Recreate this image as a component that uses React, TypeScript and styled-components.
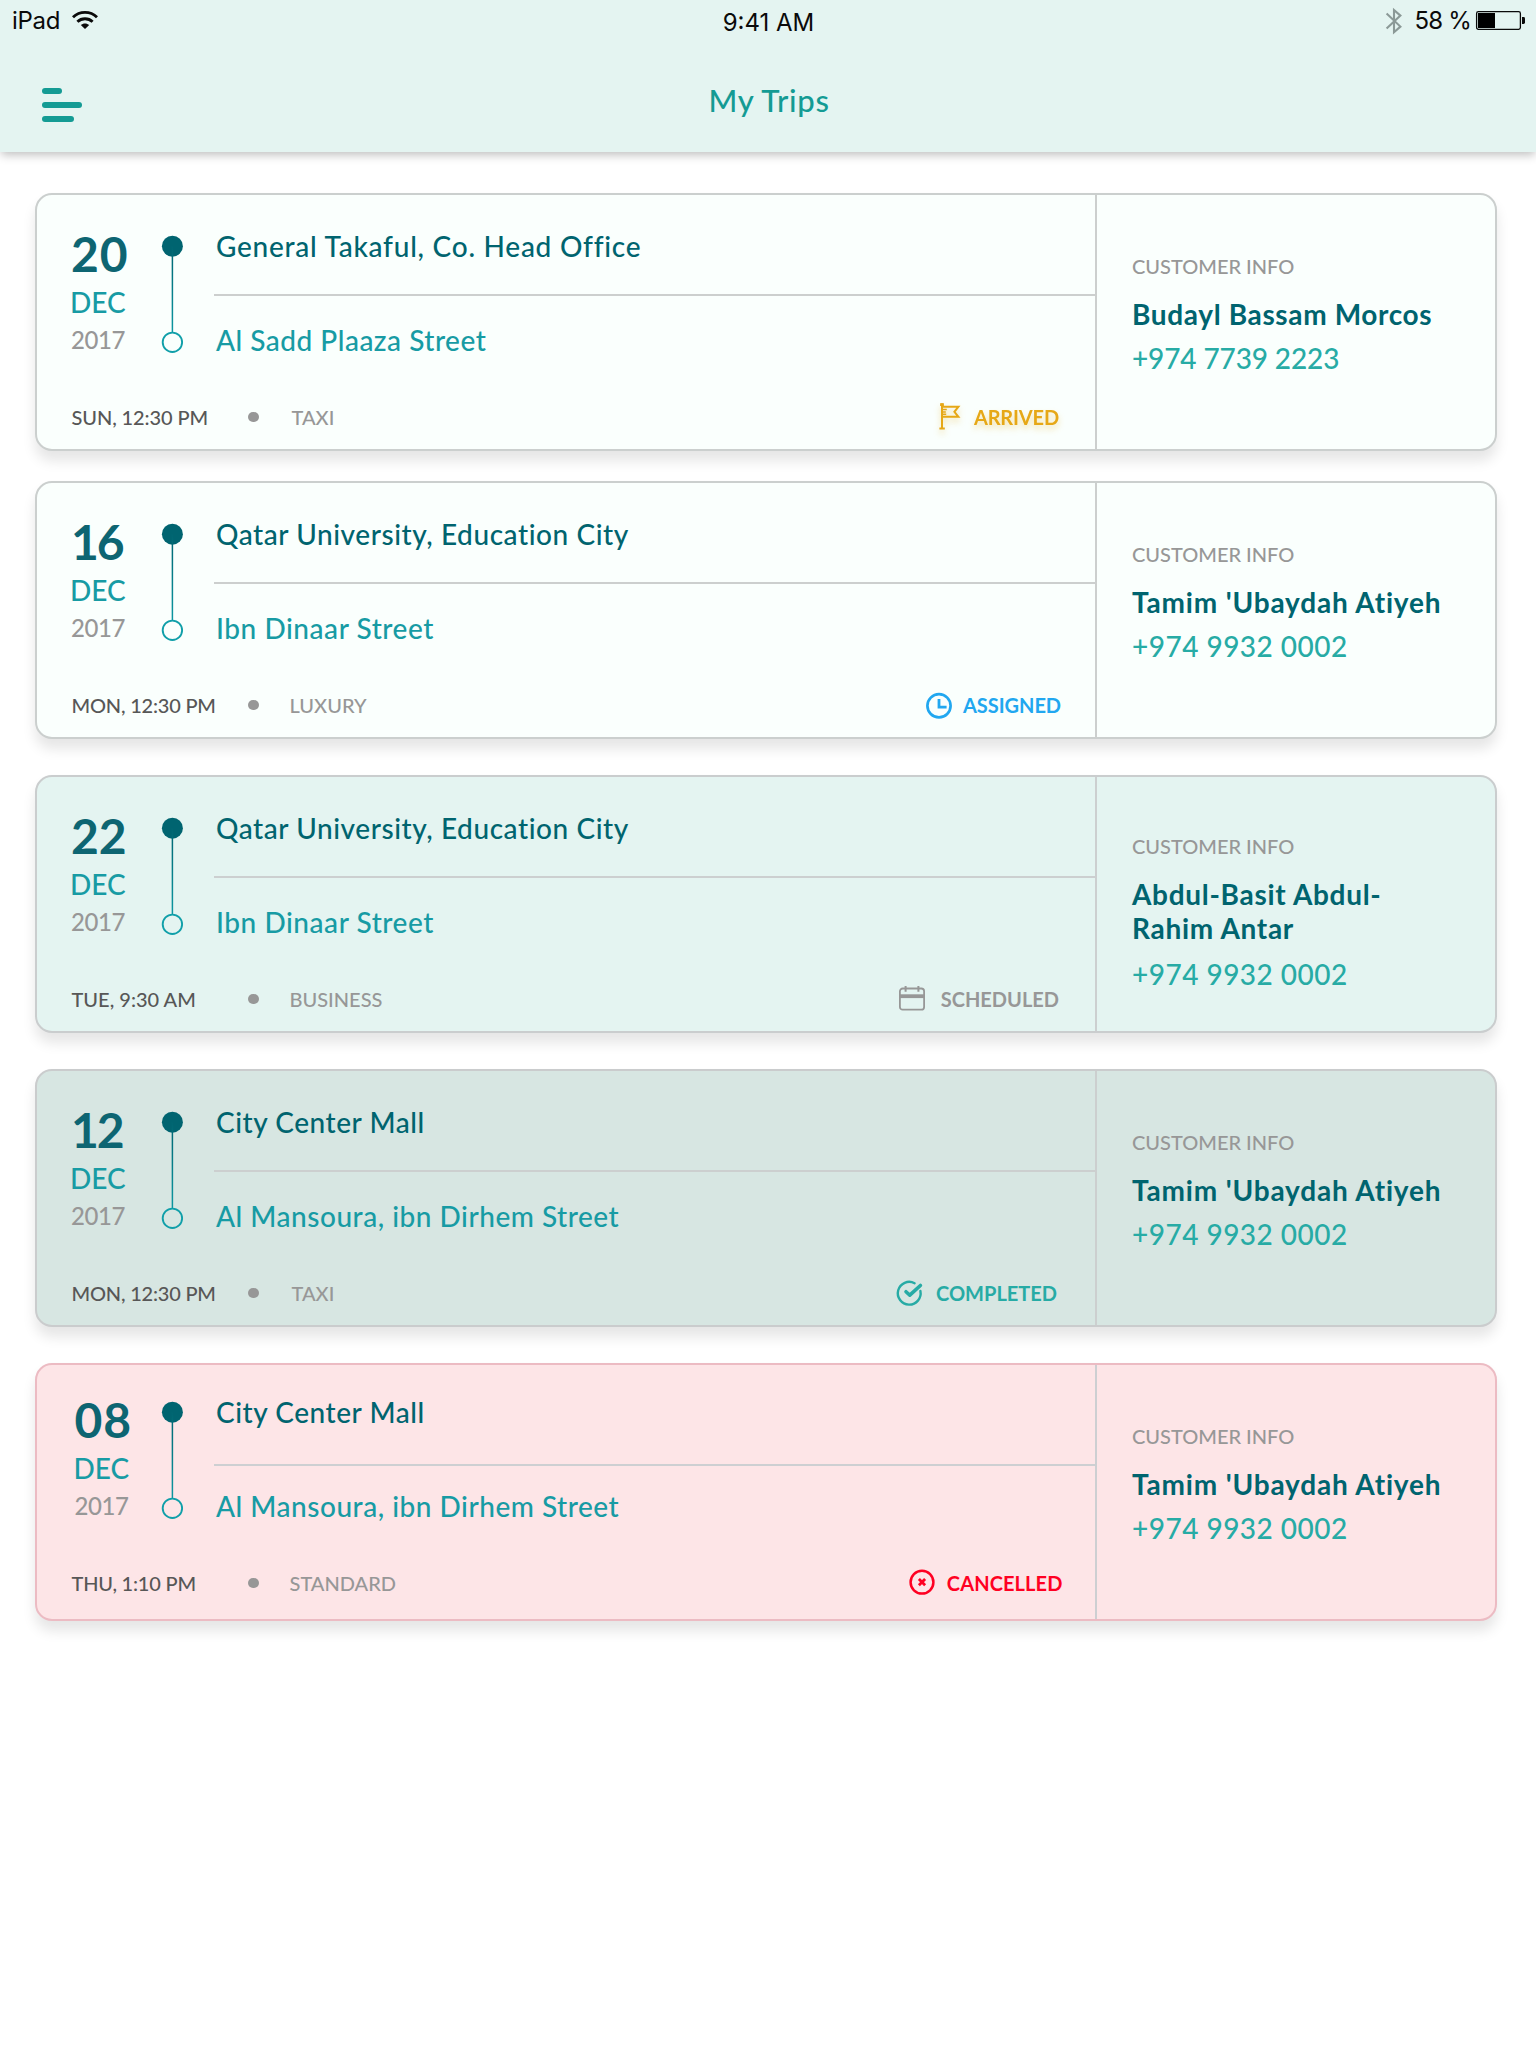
import React from "react";
import styled, { createGlobalStyle } from "styled-components";

type Tone = "fresh" | "soft" | "done" | "cancelled";
type StatusKind = "arrived" | "assigned" | "scheduled" | "completed" | "cancelled";
type Label = { text: string; track?: number };

interface Trip {
  day: Label;
  month: string;
  year: string;
  from: Label;
  to: Label;
  time: Label;
  service: Label & { indent?: number };
  status: StatusKind;
  customer: { lines: string[]; track?: number };
  phone: Label;
  tone: Tone;
  raised?: boolean;
}

const tones: Record<Tone, { bg: string; border: string; rule: string }> = {
  fresh: { bg: "#fafffd", border: "#cbcfce", rule: "#cccfce" },
  soft: { bg: "#e4f4f1", border: "#cacdce", rule: "#cccfd0" },
  done: { bg: "#d7e6e2", border: "#cacccd", rule: "#cccfcf" },
  cancelled: { bg: "#fde5e7", border: "#ecbbc3", rule: "#cdcfd2" },
};

const statuses: Record<StatusKind, { text: string; color: string; end: number; gap: number; track: number }> = {
  arrived: { text: "ARRIVED", color: "#e6a817", end: 36, gap: 14, track: -0.15 },
  assigned: { text: "ASSIGNED", color: "#21a7f0", end: 34, gap: 11, track: -0.05 },
  scheduled: { text: "SCHEDULED", color: "#979797", end: 36, gap: 16, track: 0 },
  completed: { text: "COMPLETED", color: "#27aba5", end: 38, gap: 13, track: 0 },
  cancelled: { text: "CANCELLED", color: "#ff0022", end: 32.5, gap: 12, track: 0.1 },
};

const trips: Trip[] = [
  {
    day: { text: "20", track: 0.8 }, month: "DEC", year: "2017",
    from: { text: "General Takaful, Co. Head Office", track: 0.75 },
    to: { text: "Al Sadd Plaaza Street", track: 0.5 },
    time: { text: "SUN, 12:30 PM", track: -0.1 },
    service: { text: "TAXI", indent: 2 },
    status: "arrived",
    customer: { lines: ["Budayl Bassam Morcos"], track: 0.64 },
    phone: { text: "+974 7739 2223", track: -0.12 },
    tone: "fresh",
  },
  {
    day: { text: "16", track: -2 }, month: "DEC", year: "2017",
    from: { text: "Qatar University, Education City", track: 0.57 },
    to: { text: "Ibn Dinaar Street", track: 0.55 },
    time: { text: "MON, 12:30 PM", track: -0.2 },
    service: { text: "LUXURY" },
    status: "assigned",
    customer: { lines: ["Tamim 'Ubaydah Atiyeh"], track: 0.82 },
    phone: { text: "+974 9932 0002", track: 0.48 },
    tone: "fresh",
  },
  {
    day: { text: "22", track: 0 }, month: "DEC", year: "2017",
    from: { text: "Qatar University, Education City", track: 0.57 },
    to: { text: "Ibn Dinaar Street", track: 0.55 },
    time: { text: "TUE, 9:30 AM" },
    service: { text: "BUSINESS" },
    status: "scheduled",
    customer: { lines: ["Abdul-Basit Abdul-", "Rahim Antar"], track: 0.7 },
    phone: { text: "+974 9932 0002", track: 0.48 },
    tone: "soft",
  },
  {
    day: { text: "12", track: -2 }, month: "DEC", year: "2017",
    from: { text: "City Center Mall", track: 0.55 },
    to: { text: "Al Mansoura, ibn Dirhem Street", track: 0.52 },
    time: { text: "MON, 12:30 PM", track: -0.2 },
    service: { text: "TAXI", indent: 2 },
    status: "completed",
    customer: { lines: ["Tamim 'Ubaydah Atiyeh"], track: 0.82 },
    phone: { text: "+974 9932 0002", track: 0.48 },
    tone: "done",
  },
  {
    day: { text: "08", track: 0.8 }, month: "DEC", year: "2017",
    from: { text: "City Center Mall", track: 0.55 },
    to: { text: "Al Mansoura, ibn Dirhem Street", track: 0.52 },
    time: { text: "THU, 1:10 PM", track: -0.2 },
    service: { text: "STANDARD" },
    status: "cancelled",
    customer: { lines: ["Tamim 'Ubaydah Atiyeh"], track: 0.82 },
    phone: { text: "+974 9932 0002", track: 0.48 },
    tone: "cancelled",
    raised: true,
  },
];

const GlobalStyle = createGlobalStyle`
  *, *::before, *::after { box-sizing: border-box; }
  body { margin: 0; background: #fff; }
`;

const Screen = styled.div`
  min-height: 2048px;
  background: #fff;
  font-family: Lato, "Noto Sans", sans-serif;
  font-weight: 500;
  white-space: nowrap;
`;

const Header = styled.header`
  height: 152px;
  background: #e4f4f1;
  box-shadow: 0 4px 9px -1px rgba(0, 0, 0, 0.25);
`;

const StatusBar = styled.div`
  display: grid;
  grid-template-columns: 1fr auto 1fr;
  height: 44px;
  padding: 6px 11px 0 12px;
  font: 400 24px/30px Inter, "Liberation Sans", sans-serif;
  color: #0a0a0a;
`;

const Carrier = styled.div`
  display: flex;
  gap: 12px;
  letter-spacing: -0.3px;
`;

const Clock = styled.div`
  padding-top: 2px;
`;

const Power = styled.div`
  display: flex;
  justify-content: flex-end;
  letter-spacing: -0.8px;
`;

const Percent = styled.span`
  margin: 0 5px 0 12px;
`;

const NavBar = styled.div`
  display: grid;
  grid-template-columns: 1fr auto 1fr;
  padding: 36px 42px 0;
`;

const MenuButton = styled.button`
  display: flex;
  flex-direction: column;
  gap: 8px;
  width: 40px;
  margin-top: 8px;
  padding: 0;
  border: 0;
  background: none;
`;

const Bar = styled.span<{ $width: number }>`
  width: ${(p) => p.$width}px;
  height: 6px;
  border-radius: 3px;
  background: #149b94;
`;

const Title = styled.h1`
  margin: 0;
  padding-left: 2px;
  font-size: 31px;
  font-weight: 500;
  line-height: 40px;
  letter-spacing: 0.7px;
  color: #149b94;
`;

const TripList = styled.main`
  display: flex;
  flex-direction: column;
  gap: 36px;
  padding: 41px 39px 0 35px;

  & > :nth-child(2) { margin-top: -6px; }
`;

const Card = styled.article<{ $tone: Tone }>`
  display: flex;
  height: 258px;
  border: 2px solid ${(p) => tones[p.$tone].border};
  border-radius: 17px;
  background: ${(p) => tones[p.$tone].bg};
  box-shadow: 0 10px 13px rgba(0, 0, 0, 0.1);
`;

const Journey = styled.section<{ $tone: Tone }>`
  display: flex;
  flex-direction: column;
  width: 1060px;
  border-right: 2px solid ${(p) => tones[p.$tone].rule};
`;

const Route = styled.div`
  display: flex;
  height: 210px;
`;

const DateColumn = styled.div<{ $raised?: boolean }>`
  display: flex;
  flex-direction: column;
  width: 124px;
  padding: ${(p) => (p.$raised ? "31px 0 0 37.5px" : "35px 0 0 34px")};
`;

const Day = styled.strong<{ $track?: number }>`
  font-size: 48px;
  font-weight: 700;
  line-height: 48px;
  letter-spacing: ${(p) => p.$track ?? 0}px;
  color: #0d6572;
`;

const Month = styled.span`
  margin: 7px 0 6px -1px;
  font-size: 28px;
  line-height: 34px;
  color: #179ba4;
`;

const Year = styled.span`
  font-size: 24px;
  line-height: 30px;
  letter-spacing: -0.4px;
  color: #979797;
`;

const TrackSlot = styled.div<{ $raised?: boolean }>`
  width: 53px;
  padding-top: ${(p) => (p.$raised ? 35 : 39)}px;
`;

const Stops = styled.div`
  flex: 1;
`;

const Stop = styled.div<{ $tone: Tone; $raised?: boolean; $last?: boolean; $track?: number }>`
  height: ${(p) => (p.$last ? 109 : 101)}px;
  padding: ${(p) => (p.$last ? 27 : 34) - (p.$raised ? 4 : 0)}px 0 0 2px;
  border-bottom: ${(p) => (p.$last ? "0" : `2px solid ${tones[p.$tone].rule}`)};
  font-size: 28px;
  line-height: 34px;
  letter-spacing: ${(p) => p.$track ?? 0}px;
  color: ${(p) => (p.$last ? "#179ba4" : "#00646f")};
`;

const Footer = styled.footer<{ $raised?: boolean }>`
  display: flex;
  align-items: center;
  height: 24px;
  margin-top: ${(p) => (p.$raised ? -4 : 0)}px;
  padding-left: 34.5px;
  font-size: 20px;
  line-height: 24px;
`;

const Time = styled.span<{ $track?: number }>`
  width: 176.5px;
  letter-spacing: ${(p) => p.$track ?? 0}px;
  color: #575757;
`;

const Dot = styled.i`
  width: 10.5px;
  height: 10.5px;
  border-radius: 50%;
  background: #979797;
`;

const Service = styled.span<{ $indent?: number }>`
  margin-left: ${(p) => 31 + (p.$indent ?? 0)}px;
  color: #979797;
`;

const Status = styled.span<{ $kind: StatusKind }>`
  display: flex;
  align-items: center;
  gap: ${(p) => statuses[p.$kind].gap}px;
  margin: 0 ${(p) => statuses[p.$kind].end}px 0 auto;
  font-weight: 700;
  letter-spacing: ${(p) => statuses[p.$kind].track}px;
  color: ${(p) => statuses[p.$kind].color};
  filter: ${(p) => (p.$kind === "arrived" ? "drop-shadow(0 4px 3px rgba(230, 168, 23, 0.35))" : "none")};
`;

const Customer = styled.section<{ $compact?: boolean }>`
  display: flex;
  flex-direction: column;
  padding: ${(p) => (p.$compact ? 57 : 59)}px 0 0 35px;
`;

const Caption = styled.span`
  font-size: 20px;
  line-height: 24px;
  color: #979797;
`;

const CustomerName = styled.strong<{ $track?: number }>`
  margin-top: 19px;
  font-size: 28px;
  font-weight: 700;
  line-height: 34px;
  letter-spacing: ${(p) => p.$track ?? 0}px;
  color: #00646f;
`;

const NameLine = styled.span`
  display: block;
`;

const Phone = styled.span<{ $compact?: boolean; $track?: number }>`
  margin-top: ${(p) => (p.$compact ? 12 : 10)}px;
  font-size: 28px;
  line-height: 34px;
  letter-spacing: ${(p) => p.$track ?? 0}px;
  color: #27aba5;
`;

const Icon = styled.svg`
  display: block;
  flex: none;
  overflow: visible;
`;

const WifiIcon = () => (
  <Icon width="26" height="30" viewBox="0 0 26 30" fill="none" stroke="#0a0a0a" strokeWidth="2.9">
    <path d="M1 11.2C7.7 4.8 18.3 4.8 25 11.2" />
    <path d="M5.4 15.7c4.2-4 11-4 15.2 0" />
    <path d="M13 23l-4.2-3.9c2.3-2.2 6.1-2.2 8.4 0z" fill="#0a0a0a" stroke="none" />
  </Icon>
);

const BluetoothIcon = () => (
  <Icon width="16" height="30" viewBox="0 0 16 30" fill="none" stroke="#8b9997" strokeWidth="2.1">
    <path d="M0.6 7.6L14.4 20.6 8 26.2V4l6.4 5.6L0.6 22.4" />
  </Icon>
);

const BatteryIcon = () => (
  <Icon width="49" height="30" viewBox="0 0 49 30">
    <rect x="0.6" y="5.6" width="43.8" height="17.8" rx="1.8" fill="none" stroke="#0a0a0a" strokeWidth="1.3" />
    <rect x="2" y="7" width="17" height="15" fill="#000" />
    <path d="M46 11h1.6q1.4 0 1.4 1.4v4.2q0 1.4-1.4 1.4H46z" fill="#0a0a0a" />
  </Icon>
);

const RouteTrack = ({ id }: { id: string }) => (
  <Icon width="22" height="120" viewBox="0 0 22 120" fill="none">
    <defs>
      <linearGradient id={id} gradientUnits="userSpaceOnUse" x1="0" y1="10" x2="0" y2="112">
        <stop offset="0" stopColor="#006470" />
        <stop offset="1" stopColor="#109fa9" />
      </linearGradient>
    </defs>
    <circle cx="11.4" cy="12.2" r="10.5" fill="#006470" />
    <path d="M11.4 12v86.5" stroke={`url(#${id})`} strokeWidth="1.5" />
    <circle cx="11.4" cy="108.3" r="9.7" stroke="#109fa9" strokeWidth="1.9" />
  </Icon>
);

const StatusIcon = ({ kind }: { kind: StatusKind }) => {
  switch (kind) {
    case "arrived":
      return (
        <Icon width="21" height="28" viewBox="0 0 21 28" fill="none" stroke="currentColor" strokeWidth="2">
          <path d="M3 0.5v25M0.4 25.4h5.4" />
          <path d="M1.1 1.6h3.8" strokeWidth="2.8" />
          <path d="M3.5 3.7h15.9l-4 5.1 4 5H3.5" />
          <path d="M4 6.6h3.8M4 8.9h2.8M4 11.2h3.2" strokeWidth="1.5" />
        </Icon>
      );
    case "assigned":
      return (
        <Icon width="26" height="26" viewBox="0 0 26 26" fill="none" stroke="currentColor" strokeWidth="2.7">
          <circle cx="13" cy="13.8" r="11.6" />
          <path d="M13 7v8.2h7.6" strokeWidth="2.8" />
        </Icon>
      );
    case "scheduled":
      return (
        <Icon width="26" height="24" viewBox="0 0 26 24" fill="none" stroke="currentColor" strokeWidth="1.8">
          <rect x="0.9" y="1.5" width="24.2" height="21.2" rx="2.8" />
          <path d="M1 9.2h24" strokeWidth="3.8" />
          <path d="M6.6-0.9v5.6M19.4-0.9v5.6" strokeWidth="2" />
        </Icon>
      );
    case "completed":
      return (
        <Icon width="26" height="26" viewBox="0 0 26 26" fill="none" stroke="currentColor" strokeLinecap="round">
          <path d="M17.6 3.2A11.4 11.4 0 1 0 23.4 11" strokeWidth="2.4" />
          <path d="M9 11.7l3.8 3.5L23.4 5.5" strokeWidth="3.6" strokeLinejoin="round" />
        </Icon>
      );
    case "cancelled":
      return (
        <Icon width="26" height="26" viewBox="0 0 26 26" fill="none" stroke="currentColor">
          <circle cx="13" cy="12.2" r="11.4" strokeWidth="2.5" />
          <path d="M9.9 9.1l6.2 6.2M16.1 9.1l-6.2 6.2" strokeWidth="2.8" />
        </Icon>
      );
  }
};

const TripCard = ({ trip }: { trip: Trip }) => {
  const { tone, raised } = trip;
  const compact = trip.customer.lines.length > 1;
  return (
    <Card $tone={tone}>
      <Journey $tone={tone}>
        <Route>
          <DateColumn $raised={raised}>
            <Day $track={trip.day.track}>{trip.day.text}</Day>
            <Month>{trip.month}</Month>
            <Year>{trip.year}</Year>
          </DateColumn>
          <TrackSlot $raised={raised}>
            <RouteTrack id={`track-${trip.day.text}`} />
          </TrackSlot>
          <Stops>
            <Stop $tone={tone} $raised={raised} $track={trip.from.track}>{trip.from.text}</Stop>
            <Stop $tone={tone} $raised={raised} $track={trip.to.track} $last>{trip.to.text}</Stop>
          </Stops>
        </Route>
        <Footer $raised={raised}>
          <Time $track={trip.time.track}>{trip.time.text}</Time>
          <Dot />
          <Service $indent={trip.service.indent}>{trip.service.text}</Service>
          <Status $kind={trip.status}>
            <StatusIcon kind={trip.status} />
            {statuses[trip.status].text}
          </Status>
        </Footer>
      </Journey>
      <Customer $compact={compact}>
        <Caption>CUSTOMER INFO</Caption>
        <CustomerName $track={trip.customer.track}>
          {trip.customer.lines.map((line) => (
            <NameLine key={line}>{line}</NameLine>
          ))}
        </CustomerName>
        <Phone $compact={compact} $track={trip.phone.track}>{trip.phone.text}</Phone>
      </Customer>
    </Card>
  );
};

export default function App() {
  return (
    <Screen>
      <GlobalStyle />
      <Header>
        <StatusBar>
          <Carrier>
            iPad
            <WifiIcon />
          </Carrier>
          <Clock>9:41 AM</Clock>
          <Power>
            <BluetoothIcon />
            <Percent>58 %</Percent>
            <BatteryIcon />
          </Power>
        </StatusBar>
        <NavBar>
          <MenuButton aria-label="Menu">
            <Bar $width={20} />
            <Bar $width={40} />
            <Bar $width={32} />
          </MenuButton>
          <Title>My Trips</Title>
        </NavBar>
      </Header>
      <TripList>
        {trips.map((trip) => (
          <TripCard key={trip.day.text} trip={trip} />
        ))}
      </TripList>
    </Screen>
  );
}
